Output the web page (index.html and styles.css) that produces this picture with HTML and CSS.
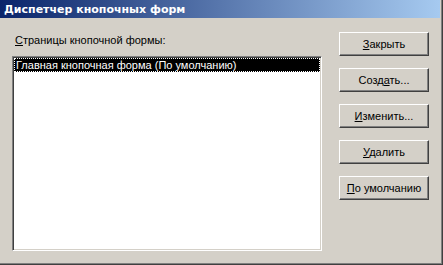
FILE: index.html
```html
<!DOCTYPE html>
<html>
<head>
<meta charset="utf-8">
<link rel="stylesheet" href="styles.css">
</head>
<body>
<div class="window">
  <div class="titlebar"><span class="title">Диспетчер кнопочных форм</span></div>
  <div class="content">
    <div class="left">
      <div class="label"><u>С</u>траницы кнопочной формы:</div>
      <div class="listbox">
        <div class="item selected">Главная кнопочная форма (По умолчанию)</div>
      </div>
    </div>
    <div class="buttons">
      <button class="btn"><u>З</u>акрыть</button>
      <button class="btn">Созд<u>а</u>ть...</button>
      <button class="btn"><u>И</u>зменить...</button>
      <button class="btn"><u>У</u>далить</button>
      <button class="btn"><u>П</u>о умолчанию</button>
    </div>
  </div>
</div>
</body>
</html>
```
FILE: styles.css
```css
html, body {
  margin: 0;
  padding: 0;
  background: #d4d0c8;
}
.window {
  width: 443px;
  height: 265px;
  box-sizing: border-box;
  background: #d4d0c8;
  border-right: 1px solid #404040;
  border-bottom: 1px solid #404040;
  box-shadow: inset -1px -1px #808080;
  padding: 0 2px 2px 0;
  display: flex;
  flex-direction: column;
  font-family: "Liberation Sans", Arial, sans-serif;
  font-size: 11px;
  color: #000;
}
.titlebar {
  height: 18px;
  background: linear-gradient(to right, #0a246a, #a6caf0);
  display: flex;
  align-items: center;
  padding-left: 4px;
}
.title {
  color: #fff;
  font-family: "DejaVu Sans", Verdana, sans-serif;
  font-weight: bold;
  font-size: 11px;
}
.content {
  display: flex;
  flex: 1;
}
.left {
  margin-left: 12px;
  width: 310px;
  display: flex;
  flex-direction: column;
}
.label {
  margin-top: 16px;
  padding-left: 3px;
  height: 13px;
  line-height: 13px;
}
.label u, .btn u {
  text-decoration: underline;
}
.listbox {
  margin-top: 9px;
  height: 195px;
  box-sizing: border-box;
  background: #fff;
  border: 1px solid;
  border-color: #808080 #fff #fff #808080;
  box-shadow: inset 1px 1px #404040, inset -1px -1px #d4d0c8;
  padding: 1px;
}
.item {
  height: 14px;
  line-height: 14px;
  padding-left: 2px;
  white-space: nowrap;
}
.item.selected {
  background: #000;
  color: #fff;
  outline: 1px dotted #fff;
  outline-offset: -1px;
}
.buttons {
  margin-left: 17px;
  width: 90px;
  padding-top: 14px;
  display: flex;
  flex-direction: column;
  gap: 12px;
}
.btn {
  height: 24px;
  width: 90px;
  box-sizing: border-box;
  background: #d4d0c8;
  border: 1px solid;
  border-color: #fff #404040 #404040 #fff;
  box-shadow: inset -1px -1px #808080;
  font-family: "Liberation Sans", Arial, sans-serif;
  font-size: 11px;
  color: #000;
  padding: 0;
  margin: 0;
}
```
